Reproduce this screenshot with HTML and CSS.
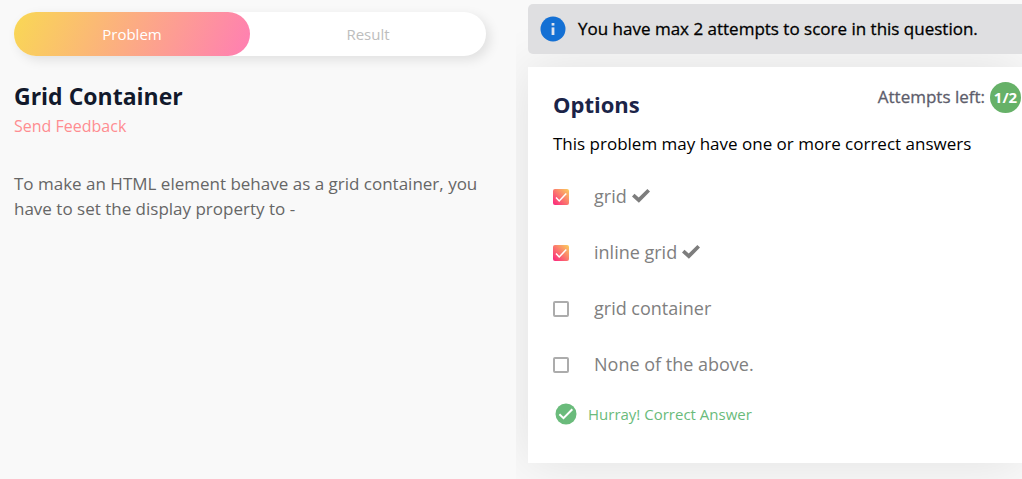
FILE: index.html
```html
<!DOCTYPE html>
<html lang="en">
<head>
<meta charset="utf-8">
<meta name="viewport" content="width=device-width, initial-scale=1">
<title>Grid Container</title>
<link rel="stylesheet" href="styles.css">
</head>
<body>
<main class="workspace">
  <section class="problem">
    <div class="tabs" role="tablist">
      <button class="tab tab-active" type="button" role="tab" aria-selected="true">Problem</button>
      <button class="tab" type="button" role="tab" aria-selected="false">Result</button>
    </div>
    <h1 class="title">Grid Container</h1>
    <a class="feedback-link" href="#feedback">Send Feedback</a>
    <p class="statement">To make an HTML element behave as a grid container, you have to set the display property to -</p>
  </section>
  <section class="answer">
    <div class="notice">
      <svg class="notice-icon" viewBox="0 0 26 26" aria-hidden="true">
        <circle cx="13" cy="13" r="12.5" fill="#1470d4"/>
        <rect x="11.6" y="7" width="2.8" height="2.6" fill="#e0e4ee"/>
        <rect x="11.6" y="11.4" width="2.8" height="7.6" fill="#e0e4ee"/>
      </svg>
      <span>You have max 2 attempts to score in this question.</span>
    </div>
    <form class="card">
      <div class="card-head">
        <h2 class="card-title">Options</h2>
        <div class="attempts">Attempts left: <span class="badge">1/2</span></div>
      </div>
      <p class="hint">This problem may have one or more correct answers</p>
      <div class="options">
        <label class="option"><input class="box" type="checkbox" checked><span>grid</span>
          <svg class="tick" viewBox="0 0 18 14" aria-hidden="true"><path d="M0 7.4 2.5 4.8 6.7 8.5 15.4 0 18 2.6 6.9 13.8Z" fill="#7d7d7d"/></svg></label>
        <label class="option"><input class="box" type="checkbox" checked><span>inline grid</span>
          <svg class="tick" viewBox="0 0 18 14" aria-hidden="true"><path d="M0 7.4 2.5 4.8 6.7 8.5 15.4 0 18 2.6 6.9 13.8Z" fill="#7d7d7d"/></svg></label>
        <label class="option"><input class="box" type="checkbox"><span>grid container</span></label>
        <label class="option"><input class="box" type="checkbox"><span>None of the above.</span></label>
      </div>
      <div class="verdict">
        <svg class="verdict-icon" viewBox="0 0 22 22" aria-hidden="true">
          <circle cx="11" cy="11" r="10.5" fill="#6abb7b"/>
          <path d="M4.4 11.3 8.5 15.2 17.3 6.3" fill="none" stroke="#fff" stroke-width="2"/>
        </svg>
        <span>Hurray! Correct Answer</span>
      </div>
    </form>
  </section>
</main>
</body>
</html>
```
FILE: styles.css
```css
* {
  box-sizing: border-box;
}

body {
  margin: 0;
  background: #f9f9f9;
  font-family: "Open Sans", "Noto Sans", sans-serif;
  font-size: 17px;
  line-height: 24px;
}

h1, h2, p {
  margin: 0;
}

.workspace {
  display: grid;
  grid-template-columns: 516fr 506fr;
  min-height: 100vh;
}

.problem {
  padding: 12px 30px 24px 14px;
}

.tabs {
  display: flex;
  border-radius: 22px;
  background: #fff;
  box-shadow: 4px 4px 12px rgba(0, 0, 0, 0.1);
}

.tab {
  flex: 1;
  height: 44px;
  padding: 0;
  border: 0;
  border-radius: 22px;
  background: none;
  color: #bdbdbd;
  font-family: inherit;
  font-size: 15px;
}

.tab-active {
  background: linear-gradient(114deg, #f9d854, #ff7eb3);
  color: #fff;
}

.title {
  margin-top: 24px;
  color: #12192c;
  font-size: 23px;
  line-height: 32px;
}

.feedback-link {
  display: inline-block;
  margin-top: 2px;
  color: #ff8d91;
  font-size: 16px;
  text-decoration: none;
}

.statement {
  margin-top: 33px;
  color: #666;
  line-height: 25px;
}

.answer {
  overflow: hidden;
  padding: 4px 0 16px 12px;
}

.notice {
  position: relative;
  z-index: 1;
  display: flex;
  align-items: center;
  gap: 12px;
  height: 50px;
  padding-left: 12px;
  border-radius: 5px 0 0 5px;
  background: #dfdfe1;
  color: #000;
  -webkit-text-stroke: 0.3px #000;
}

.notice-icon {
  width: 26px;
  height: 26px;
}

.card {
  margin-top: 13px;
  padding: 14px 0 27px 25px;
  background: #fff;
  box-shadow: 0 0 50px rgba(0, 0, 0, 0.1);
}

.card-head {
  display: flex;
  justify-content: space-between;
}

.card-title {
  padding-top: 7px;
  color: #1b2448;
  font-size: 22px;
  line-height: 32px;
}

.attempts {
  display: flex;
  align-items: center;
  gap: 5px;
  height: 32px;
  padding-right: 1px;
  color: #5d5d6b;
  -webkit-text-stroke: 0.3px #5d5d6b;
}

.badge {
  display: grid;
  place-items: center;
  width: 31px;
  height: 31px;
  border-radius: 50%;
  background: #66b168;
  color: #fff;
  font-size: 15px;
  font-weight: 700;
  -webkit-text-stroke: 0;
}

.hint {
  margin-top: 12px;
  color: #000;
}

.options {
  margin-top: 12px;
}

.option {
  display: flex;
  align-items: center;
  height: 56px;
  color: #808080;
  font-size: 18px;
}

.box {
  width: 16px;
  height: 16px;
  margin: 2px 25px 0 0;
  border: 2px solid #acacac;
  border-radius: 2px;
  background: #fff;
  appearance: none;
}

.box:checked {
  border: 0;
  background:
    url("data:image/svg+xml,%3Csvg xmlns='http://www.w3.org/2000/svg' viewBox='0 0 16 16'%3E%3Cpath d='M3 8.5 6.2 12 13.3 4.5' fill='none' stroke='white' stroke-width='1.5'/%3E%3C/svg%3E"),
    linear-gradient(45deg, #fb217e, #fbd05d);
}

.tick {
  width: 18px;
  height: 14px;
  margin-left: 5px;
}

.verdict {
  display: flex;
  align-items: center;
  gap: 11px;
  height: 44px;
  padding-left: 2px;
  color: #6abb7b;
  font-size: 15px;
}

.verdict-icon {
  width: 22px;
  height: 22px;
}
```
